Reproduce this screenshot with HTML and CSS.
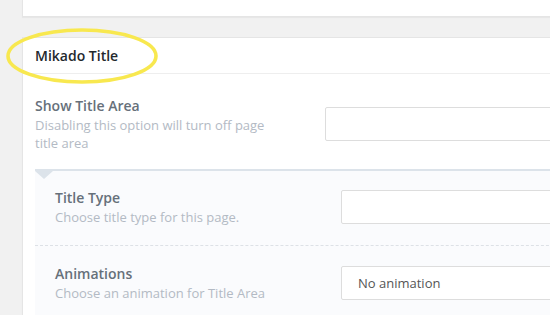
FILE: index.html
```html
<!DOCTYPE html>
<html>
<head>
  <title>Mikado Title</title>
  <link rel="stylesheet" href="styles.css">
</head>
<body>
  <div class="page">
    <div class="postbox postbox-top"></div>

    <div class="postbox">
      <h2 class="postbox-title">Mikado Title</h2>
      <div class="postbox-inside">
        <div class="field">
          <div class="field-label">
            <h4>Show Title Area</h4>
            <p>Disabling this option will turn off page title area</p>
          </div>
          <div class="field-control">
            <div class="select"></div>
          </div>
        </div>

        <div class="sub-panel">
          <div class="field sub-field">
            <div class="field-label">
              <h4>Title Type</h4>
              <p>Choose title type for this page.</p>
            </div>
            <div class="field-control">
              <div class="select"></div>
            </div>
          </div>
          <div class="field sub-field">
            <div class="field-label">
              <h4>Animations</h4>
              <p>Choose an animation for Title Area</p>
            </div>
            <div class="field-control">
              <div class="select">No animation</div>
            </div>
          </div>
        </div>
      </div>
    </div>

    <!-- highlight drawn over the box title -->
    <svg class="highlight" width="170" height="95" viewBox="0 0 170 95">
      <ellipse cx="82" cy="56" rx="74" ry="26" fill="none" stroke="#f8e84f" stroke-width="3.6"/>
    </svg>
  </div>
</body>
</html>
```

FILE: styles.css
```css
body {
  margin: 0;
  background-color: #f1f1f1;
  font-family: "Open Sans", "Liberation Sans", sans-serif;
  overflow: hidden;
}

.page {
  position: relative;
  padding-left: 22px;
  margin-right: -40px;
}

.postbox {
  background-color: #fff;
  border: 1px solid #e5e5e5;
  box-shadow: 0 1px 1px rgba(0, 0, 0, 0.04);
  margin-top: 20px;
}

.postbox-top {
  height: 16px;
  border-top: none;
  margin-top: 0;
}

.postbox-title {
  margin: 0;
  height: 35px;
  line-height: 35px;
  padding: 0 12px;
  font-size: 14px;
  font-weight: 600;
  color: #23282d;
  border-bottom: 1px solid #eee;
}

.postbox-inside {
  padding: 22px 0 0 12px;
  height: 260px;
}

.field {
  display: flex;
  align-items: center;
}

.field-label {
  width: 290px;
  flex-shrink: 0;
}

.field-label h4 {
  margin: 0;
  font-size: 14px;
  line-height: 20px;
  font-weight: 600;
  color: #66707a;
}

.field-label p {
  margin: 0;
  max-width: 245px;
  font-size: 13px;
  line-height: 18px;
  color: #b3bac4;
}

.field-control {
  flex: 1;
}

.select {
  box-sizing: border-box;
  height: 34px;
  line-height: 32px;
  padding: 0 16px;
  background-color: #fff;
  border: 1px solid #ddd;
  border-radius: 2px;
  font-size: 13px;
  color: #555;
}

.sub-panel {
  position: relative;
  margin-top: 17px;
  background-color: #fafbfd;
  border-top: 2px solid #dce3ea;
}

.sub-panel::before {
  content: "";
  position: absolute;
  left: 0;
  top: 0;
  border-left: 9px solid transparent;
  border-right: 9px solid transparent;
  border-top: 8px solid #dce3ea;
}

.sub-field {
  padding: 17px 0 19px 20px;
}

.sub-field + .sub-field {
  padding-top: 18px;
  border-top: 1px dashed #dde1e6;
}

.sub-field .field-label {
  width: 286px;
}

.highlight {
  position: absolute;
  left: 0;
  top: 0;
}
```
